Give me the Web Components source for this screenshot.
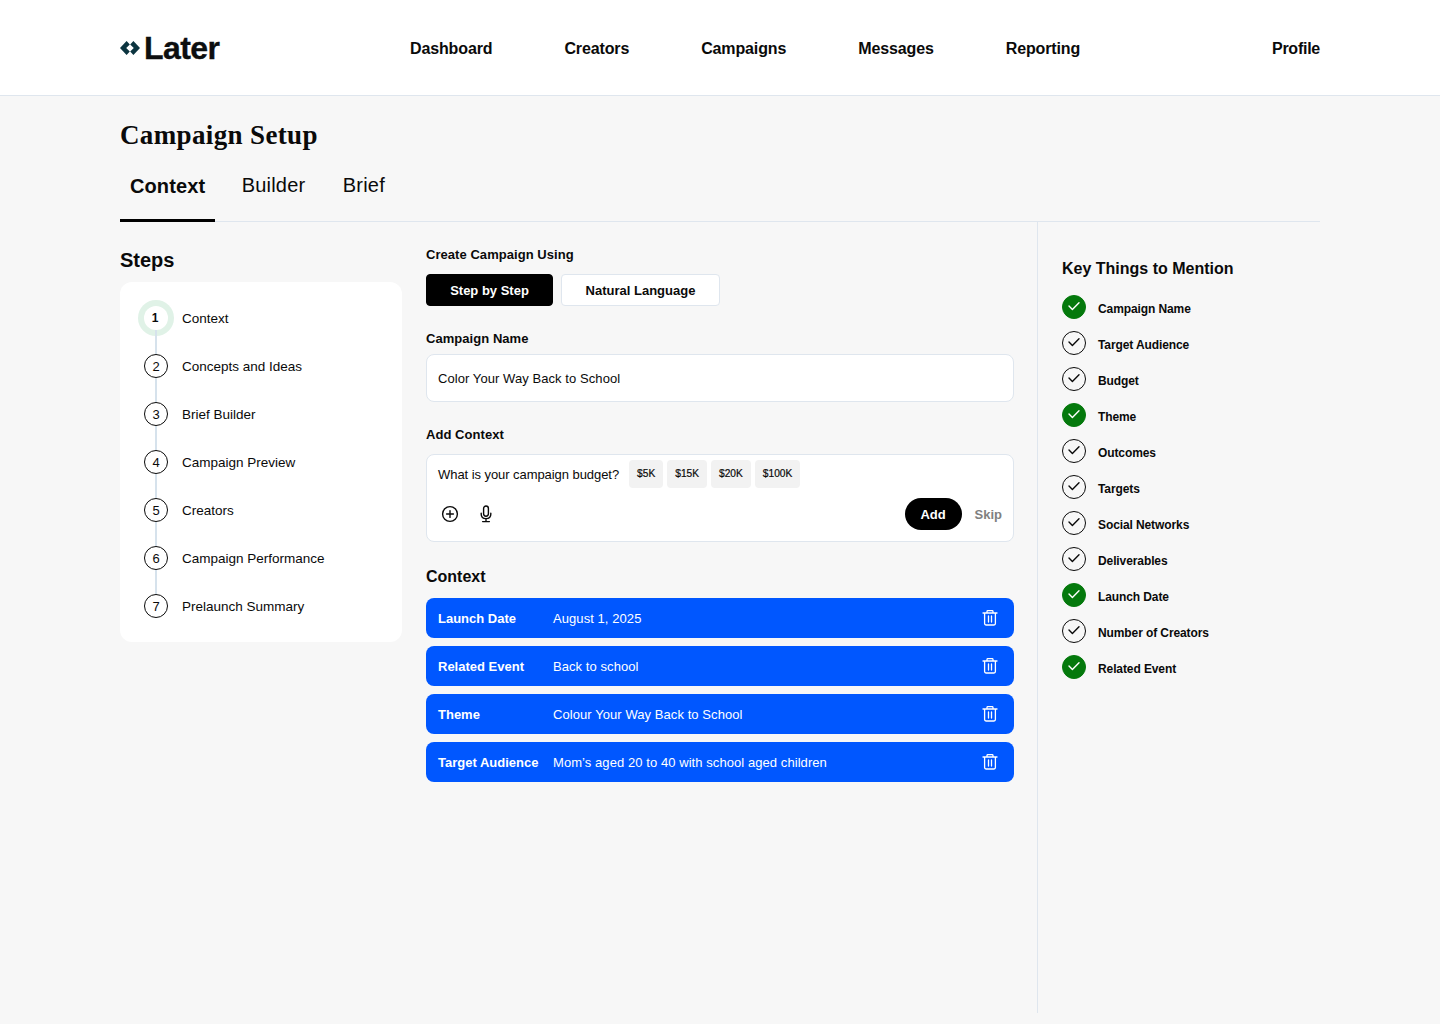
<!doctype html>
<html><head><meta charset="utf-8"><style>
html,body{margin:0;padding:0;background:#f7f7f7;}
body{font-family:"Liberation Sans",Arial,sans-serif;color:#0a0a0a;}
</style></head><body>
<app-header></app-header>
<main-page></main-page>
<script>
const def=(n,css,html)=>{customElements.define(n,class extends HTMLElement{connectedCallback(){if(this.shadowRoot)return;const r=this.attachShadow({mode:'open'});r.innerHTML='<style>'+css+'</style>'+(typeof html==='function'?html(this):html);}});};

def('later-logo',`:host{display:flex;align-items:center;gap:4px}
svg{display:block}
span{font:700 32px/36px "Liberation Sans",Arial,sans-serif;letter-spacing:-.55px;color:#0d0f10;-webkit-text-stroke:.35px #0d0f10;padding-top:1px}`,
`<svg width="20" height="14" viewBox="0 0 20 14"><path fill="#0c3540" d="M6.6 0 0 7l6.6 7 3.2-3.4L6.2 7l3.6-3.6zM13.4 0 10.2 3.4 13.8 7l-3.6 3.6 3.2 3.4L20 7z"/></svg><span>Later</span>`);

def('app-header',`:host{display:flex;align-items:center;height:95px;background:#fff;border-bottom:1px solid #dfe6ee;padding:0 120px;font:700 16px/20px "Liberation Sans",Arial,sans-serif;letter-spacing:-.13px}
later-logo{width:290px}
nav{display:flex;gap:72px;padding-top:2px}
.p{margin-left:auto;padding-top:2px;letter-spacing:-.25px}`,
`<later-logo></later-logo><nav><span>Dashboard</span><span>Creators</span><span>Campaigns</span><span>Messages</span><span>Reporting</span></nav><span class="p">Profile</span>`);

def('tab-bar',`:host{display:flex;height:72px;border-bottom:1px solid #dfe6ee;box-sizing:border-box}
div{font-size:20px;line-height:24px;padding:23px 0 0;box-sizing:border-box;letter-spacing:.2px}
.b{margin-right:37.5px}
.a{font-weight:700;padding:24px 10px 0;height:72px;border-bottom:3px solid #000;margin-right:26.5px;letter-spacing:.1px}`,
`<div class="a">Context</div><div class="b">Builder</div><div>Brief</div>`);

def('step-item',`:host{display:flex;gap:14px;height:48px;font-size:13.5px}
.c{display:flex;flex-direction:column;align-items:center;width:24px}
.n{width:24px;height:24px;box-sizing:border-box;border:1.5px solid #0a0a0a;border-radius:50%;display:flex;align-items:center;justify-content:center;font-size:13px;line-height:1;background:#fff;flex:none}
.l{width:2px;flex:1;background:#d6e2ec}
:host([active]) .n{border:none;box-shadow:0 0 0 6px #e0f2e7;font-weight:700;font-size:12px;padding-right:2px}
:host([last]) .l{display:none}
.t{line-height:24px;padding-top:1px}`,
h=>`<div class="c"><div class="n">${h.getAttribute('n')}</div><div class="l"></div></div><div class="t"><slot></slot></div>`);

def('steps-card',`:host{display:block;background:#fff;border-radius:12px;padding:24px 24px 0;height:360px;box-sizing:border-box}`,`<slot></slot>`);

def('seg-btn',`:host{display:flex;align-items:center;justify-content:center;height:32px;box-sizing:border-box;border-radius:4px;font-size:13px;font-weight:700;background:#fff;border:1px solid #dfe6ee}
:host([on]){background:#000;color:#fff;border-color:#000}`,`<slot></slot>`);

def('budget-chip',`:host{display:flex;align-items:center;height:28px;padding:0 8px;background:#f2f2f2;border-radius:4px;font-size:10.2px;line-height:1;-webkit-text-stroke:.2px #0a0a0a}`,`<slot></slot>`);

const trash=`<svg width="16" height="16" viewBox="0 0 16 16" fill="none" stroke="#fff" stroke-width="1.3" stroke-linejoin="round" stroke-linecap="round"><path d="M1 3h14M5 3V1.5q0-.9.9-.9h4.2q.9 0 .9.9V3M2.6 3v10.6q0 1.4 1.4 1.4h8q1.4 0 1.4-1.4V3M6.5 6v6M9.5 6v6"/></svg>`;
def('context-row',`:host{display:flex;align-items:center;height:40px;background:#0057ff;border-radius:8px;color:#fff;font-size:13px;padding:0 16px 0 12px;margin-bottom:8px}
b{width:115px;flex:none}
span{flex:1;letter-spacing:.07px}
svg{display:block}`,
h=>`<b>${h.getAttribute('k')}</b><span><slot></slot></span>${trash}`);

def('key-item',`:host{display:flex;align-items:center;gap:12px;height:24px;margin-bottom:12px;font-size:12px;font-weight:700;letter-spacing:-.1px}
.c{width:24px;height:24px;box-sizing:border-box;border:1.3px solid #0a0a0a;border-radius:50%;display:flex;align-items:center;justify-content:center;flex:none}
:host([on]) .c{background:#04790c;border-color:#04790c}
svg{display:block;margin-top:-2px}
.t{padding-top:4px}
:host([on]) path{stroke:#fff}`,
`<div class="c"><svg width="12" height="10" viewBox="0 0 12 10" fill="none"><path d="M1 5 4.4 8.5 11 1.8" stroke="#0a0a0a" stroke-width="1.4" stroke-linecap="round" stroke-linejoin="round"/></svg></div><div class="t"><slot></slot></div>`);

def('main-page',`:host{display:block;padding:0 120px;height:928px;box-sizing:border-box}
h1{margin:0;padding-top:24px;height:54px;box-sizing:border-box;font:700 27px/30px "Liberation Serif","Times New Roman",serif;letter-spacing:.36px}
.cols{display:flex;height:791px}
.left{width:282px;margin-right:24px;padding-top:26px;box-sizing:border-box}
h2{margin:0;font-size:20px;line-height:24px;margin-bottom:10px}
.mid{width:588px;margin-right:23px;padding-top:25px;box-sizing:border-box}
.lab{font-size:13px;line-height:16px;font-weight:700;letter-spacing:.05px}
.seg{display:flex;gap:8px;margin-top:11px}
.input{height:48px;margin-top:7px;background:#fff;border:1px solid #dfe6ee;border-radius:8px;box-sizing:border-box;padding:0 11px;display:flex;align-items:center;font-size:13px;letter-spacing:.07px}
.box{height:88px;margin-top:11px;background:#fff;border:1px solid #dfe6ee;border-radius:8px;box-sizing:border-box;padding:5px 11px 0;font-size:13px}
.q{display:flex;align-items:center;gap:4px}
.q span{margin-right:6px;letter-spacing:-.06px}
.act{display:flex;align-items:center;margin-top:10px;height:32px}
.act svg{display:block}
.add{margin-left:auto;width:57px;height:32px;border-radius:16px;background:#000;color:#fff;font-size:13px;font-weight:700;display:flex;align-items:center;justify-content:center}
.skip{margin-left:13px;font-size:13px;font-weight:700;color:#808080}
h3{margin:0;font-size:16px;line-height:20px}
.right{flex:1;border-left:1px solid #dfe6ee;padding:37px 0 0 24px;box-sizing:border-box}
</style>`,
`<h1>Campaign Setup</h1><tab-bar></tab-bar>
<div class="cols">
<section class="left"><h2>Steps</h2><steps-card>
<step-item n="1" active>Context</step-item><step-item n="2">Concepts and Ideas</step-item><step-item n="3">Brief Builder</step-item><step-item n="4">Campaign Preview</step-item><step-item n="5">Creators</step-item><step-item n="6">Campaign Performance</step-item><step-item n="7" last>Prelaunch Summary</step-item>
</steps-card></section>
<section class="mid">
<div class="lab">Create Campaign Using</div>
<div class="seg"><seg-btn on style="width:127px">Step by Step</seg-btn><seg-btn style="width:159px">Natural Language</seg-btn></div>
<div class="lab" style="margin-top:25px">Campaign Name</div>
<div class="input">Color Your Way Back to School</div>
<div class="lab" style="margin-top:25px">Add Context</div>
<div class="box"><div class="q"><span>What is your campaign budget?</span><budget-chip>$5K</budget-chip><budget-chip>$15K</budget-chip><budget-chip>$20K</budget-chip><budget-chip>$100K</budget-chip></div>
<div class="act">
<svg width="18" height="18" viewBox="0 0 18 18" fill="none" stroke="#0a0a0a" stroke-width="1.4" stroke-linecap="round" style="margin-left:3px"><circle cx="9" cy="9" r="7.4"/><path d="M9 5.6v6.8M5.6 9h6.8"/></svg>
<svg width="18" height="18" viewBox="0 0 18 18" fill="none" stroke="#0a0a0a" stroke-width="1.4" stroke-linecap="round" style="margin-left:18px"><rect x="6.6" y="1" width="4.8" height="10.2" rx="2.4"/><path d="M4.2 8.2v1q0 4.4 4.8 4.4t4.8-4.4v-1M9 13.6v3M5.6 16.6h6.8"/></svg>
<div class="add">Add</div><div class="skip">Skip</div></div></div>
<h3 style="margin-top:25px;margin-bottom:11px">Context</h3>
<context-row k="Launch Date">August 1, 2025</context-row>
<context-row k="Related Event">Back to school</context-row>
<context-row k="Theme">Colour Your Way Back to School</context-row>
<context-row k="Target Audience">Mom’s aged 20 to 40 with school aged children</context-row>
</section>
<aside class="right"><h3 style="margin-bottom:16px">Key Things to Mention</h3>
<key-item on>Campaign Name</key-item><key-item>Target Audience</key-item><key-item>Budget</key-item><key-item on>Theme</key-item><key-item>Outcomes</key-item><key-item>Targets</key-item><key-item>Social Networks</key-item><key-item>Deliverables</key-item><key-item on>Launch Date</key-item><key-item>Number of Creators</key-item><key-item on>Related Event</key-item>
</aside></div>`);
</script>
</body></html>
